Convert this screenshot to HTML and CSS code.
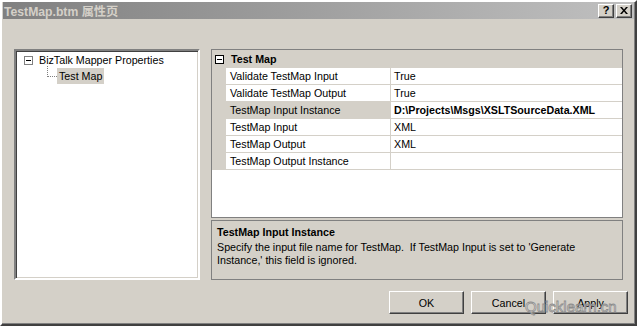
FILE: index.html
```html
<!DOCTYPE html>
<html>
<head>
    <title>TestMap.btm 属性页</title>
    <link rel="stylesheet" href="styles.css">
</head>
<body>
    <div class="window">
        <div class="titlebar">
            <span class="title">TestMap.btm 属性页</span>
            <div class="caption-buttons">
                <span class="cap-btn help">?</span>
                <span class="cap-btn">
                    <svg width="8" height="7" viewBox="0 0 8 7"><path d="M0 0 L2 0 L4 2.5 L6 0 L8 0 L5 3.5 L8 7 L6 7 L4 4.5 L2 7 L0 7 L3 3.5 Z" fill="#000"/></svg>
                </span>
            </div>
        </div>
        <div class="content">
            <div class="panels">
                <div class="tree">
                    <div class="node"><span class="toggle"></span>BizTalk Mapper Properties</div>
                    <div class="node child"><span class="connector"></span><span class="label selected">Test Map</span></div>
                </div>
                <div class="props">
                    <div class="grid">
                        <div class="category"><span class="toggle"></span>Test Map</div>
                        <div class="row"><span class="name">Validate TestMap Input</span><span class="value">True</span></div>
                        <div class="row"><span class="name">Validate TestMap Output</span><span class="value">True</span></div>
                        <div class="row active"><span class="name">TestMap Input Instance</span><span class="value">D:\Projects\Msgs\XSLTSourceData.XML</span></div>
                        <div class="row"><span class="name">TestMap Input</span><span class="value">XML</span></div>
                        <div class="row"><span class="name">TestMap Output</span><span class="value">XML</span></div>
                        <div class="row"><span class="name">TestMap Output Instance</span><span class="value"></span></div>
                    </div>
                    <div class="desc">
                        <div class="desc-title">TestMap Input Instance</div>
                        <div class="desc-text">Specify the input file name for TestMap.&nbsp; If TestMap Input is set to 'Generate Instance,' this field is ignored.</div>
                    </div>
                </div>
            </div>
            <div class="buttons">
                <button class="button">OK</button>
                <button class="button">Cancel</button>
                <button class="button">Apply</button>
            </div>
        </div>
        <div class="watermark">Quicklearn.cn</div>
    </div>
</body>
</html>
```

FILE: styles.css
```css
body {
    margin: 0;
    background: #fff;
    font-family: "Liberation Sans", Arial, sans-serif;
    font-size: 10.7px;
    color: #000;
}
.window {
    position: relative;
    box-sizing: border-box;
    width: 637px;
    height: 326px;
    background: #d4d0c8;
    border-style: solid;
    border-width: 2px;
    border-color: #fff #404040 #404040 #fff;
    box-shadow: inset -1px -1px #808080, inset 1px 1px #d4d0c8;
    padding: 0 1px 1px 1px;
    display: flex;
    flex-direction: column;
}
.titlebar {
    height: 17px;
    background: linear-gradient(to right, #808080, #c0c0c0);
    display: flex;
    align-items: center;
    justify-content: space-between;
    padding: 0 2px 0 1px;
}
.title {
    color: #d4d0c8;
    font-weight: bold;
    font-size: 12.2px;
    font-family: "Liberation Sans", "Noto Sans CJK SC", sans-serif;
}
.caption-buttons {
    display: flex;
    gap: 2px;
}
.cap-btn {
    box-sizing: border-box;
    width: 16px;
    height: 14px;
    background: #d4d0c8;
    border: 1px solid;
    border-color: #fff #404040 #404040 #fff;
    box-shadow: inset -1px -1px #808080;
    display: flex;
    align-items: center;
    justify-content: center;
    font-weight: bold;
    font-size: 11px;
    line-height: 1;
}
.help {
    padding-bottom: 1px;
}
.content {
    flex: 1;
    padding: 30px 11px 0 11px;
    display: flex;
    flex-direction: column;
}
.panels {
    display: flex;
    gap: 11px;
    height: 231px;
}
.tree {
    box-sizing: border-box;
    width: 186px;
    background: #fff;
    border: 2px solid;
    border-color: #808080 #fff #fff #808080;
    box-shadow: inset 1px 1px #404040, inset -1px -1px #d4d0c8;
    padding: 1px 0 0 8px;
}
.node {
    height: 16px;
    display: flex;
    align-items: center;
    white-space: nowrap;
}
.toggle {
    box-sizing: border-box;
    position: relative;
    width: 9px;
    height: 9px;
    border: 1px solid #808080;
    background: #fff;
    margin-right: 6px;
    flex: none;
}
.toggle::after {
    content: "";
    position: absolute;
    left: 1px;
    top: 3px;
    width: 5px;
    height: 1px;
    background: #000;
}
.child {
    padding-left: 23px;
}
.connector {
    width: 9px;
    height: 10px;
    margin-top: -10px;
    border-left: 1px dotted #808080;
    border-bottom: 1px dotted #808080;
    flex: none;
}
.label {
    padding: 1px 2px;
    height: 16px;
    box-sizing: border-box;
    line-height: 14px;
}
.selected {
    background: #d4d0c8;
}
.props {
    flex: 1;
    display: flex;
    flex-direction: column;
    gap: 2px;
}
.grid {
    flex: 1;
    background: #fff;
    border: 1px solid #808080;
}
.category {
    height: 18px;
    background: #d4d0c8;
    display: flex;
    align-items: center;
    padding-left: 3px;
    font-weight: bold;
}
.category .toggle {
    border-color: #000;
    margin-right: 7px;
}
.row {
    display: flex;
    height: 17px;
    box-sizing: border-box;
    margin-left: 14px;
    border-bottom: 1px solid #d4d0c8;
    position: relative;
}
.row::before {
    content: "";
    position: absolute;
    left: -14px;
    top: 0;
    width: 14px;
    height: 17px;
    background: #d4d0c8;
}
.name {
    box-sizing: border-box;
    width: 165px;
    padding-left: 4px;
    border-right: 1px solid #d4d0c8;
    line-height: 16px;
    white-space: nowrap;
}
.value {
    padding-left: 3px;
    line-height: 16px;
    white-space: nowrap;
}
.active .name {
    background: #d4d0c8;
}
.active .value {
    font-weight: bold;
}
.desc {
    box-sizing: border-box;
    height: 60px;
    border: 1px solid #808080;
    padding: 4px 5px;
}
.desc-title {
    font-weight: bold;
    line-height: 14px;
    margin-bottom: 2px;
}
.desc-text {
    line-height: 13px;
    width: 385px;
}
.buttons {
    display: flex;
    justify-content: flex-end;
    gap: 7px;
    margin-top: 11px;
    margin-right: -5px;
}
.button {
    box-sizing: border-box;
    width: 75px;
    height: 23px;
    background: #d4d0c8;
    border: 1px solid;
    border-color: #fff #404040 #404040 #fff;
    box-shadow: inset -1px -1px #808080;
    font-family: "Liberation Sans", Arial, sans-serif;
    font-size: 10.7px;
    color: #000;
    padding: 0;
}
.watermark {
    position: absolute;
    left: 523px;
    top: 296px;
    font-size: 15px;
    color: rgba(255, 255, 255, 0.6);
    -webkit-text-stroke: 0.8px #8c8c8c;
}
```
